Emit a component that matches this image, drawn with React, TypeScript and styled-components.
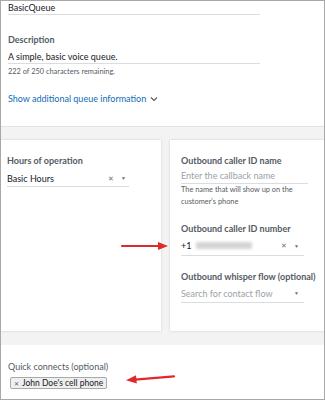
import React from 'react';
import styled, { createGlobalStyle } from 'styled-components';

const GlobalStyle = createGlobalStyle`
  html, body {
    margin: 0;
    padding: 0;
    background: #fff;
  }
  * {
    box-sizing: border-box;
  }
`;

// Page shell
const Page = styled.div`
  position: relative;
  width: 325px;
  height: 400px;
  border: 1px solid #a8a8a8;
  display: flex;
  flex-direction: column;
  overflow: hidden;
  font-family: Lato, 'Liberation Sans', sans-serif;
  color: #16191f;
`;

const TopSection = styled.section`
  height: 126px;
  padding-left: 7px;
  border-bottom: 1px solid #e2e2e2;
  display: flex;
  flex-direction: column;
`;

const GrayBand = styled.div`
  background: #f3f3f3;
  padding: 13px 0 14px;
  display: flex;
  gap: 9px;
`;

const Panel = styled.div<{ $width?: number }>`
  background: #fff;
  height: 191px;
  ${(p) => (p.$width ? `width: ${p.$width}px; flex-shrink: 0;` : 'flex: 1; min-width: 0;')}
  box-shadow: 0 0 2px rgba(0, 0, 0, 0.18);
  display: flex;
  flex-direction: column;
  padding: 14px 0 0 ${(p) => (p.$width ? 6 : 11)}px;
`;

const BottomSection = styled.section`
  flex: 1;
  padding: 15px 0 0 7px;
  display: flex;
  flex-direction: column;
  align-items: flex-start;
`;

// Form parts
const Label = styled.div<{ $top?: number; $weight?: number }>`
  font-size: 9px;
  font-weight: ${(p) => p.$weight ?? 700};
  line-height: 14px;
  color: #545b64;
  margin-top: ${(p) => p.$top ?? 0}px;
  white-space: nowrap;
`;

const Line = styled.div<{ $width: number; $height?: number; $muted?: boolean; $pad?: number }>`
  width: ${(p) => p.$width}px;
  height: ${(p) => p.$height ?? 16}px;
  padding-top: ${(p) => p.$pad ?? 0}px;
  border-bottom: 1px solid #dcdcdc;
  display: flex;
  align-items: center;
  font-size: 9px;
  color: ${(p) => (p.$muted ? '#9aa2a6' : '#16191f')};
  white-space: nowrap;
`;

const Helper = styled.div<{ $top?: number; $width?: number }>`
  font-size: 7.4px;
  line-height: 12px;
  color: #545b64;
  margin-top: ${(p) => p.$top ?? 0}px;
  ${(p) => (p.$width ? `width: ${p.$width}px;` : '')}
`;

const LinkText = styled.a`
  margin-top: 14px;
  font-size: 9px;
  line-height: 14px;
  color: #0f6cb5;
  text-decoration: none;
  display: flex;
  align-items: center;
  gap: 4px;
`;

const Controls = styled.span<{ $right?: number }>`
  margin-left: auto;
  margin-right: ${(p) => p.$right ?? 5}px;
  display: flex;
  align-items: center;
  gap: 7px;
  font-size: 7px;
  color: #687078;
`;

const Caret = styled.span`
  font-size: 5px;
  color: #687078;
`;

const Blurred = styled.span`
  display: inline-block;
  width: 56px;
  height: 7px;
  margin-left: 5px;
  background: #d4d4d4;
  filter: blur(1.5px);
`;

const Chip = styled.div`
  margin-top: 3px;
  margin-left: 2px;
  height: 12px;
  padding: 0 3px;
  border: 1px solid #a9a9a9;
  border-radius: 2px;
  background: #efefef;
  font-size: 8.5px;
  display: flex;
  align-items: center;
  gap: 3px;
  color: #16191f;
`;

const ChipX = styled.span`
  font-size: 6px;
  color: #545b64;
`;

const Arrow = styled.svg<{ $x: number; $y: number }>`
  position: absolute;
  left: ${(p) => p.$x}px;
  top: ${(p) => p.$y}px;
  overflow: visible;
`;

const App: React.FC = () => {
  return (
    <Page>
      <GlobalStyle />
      <TopSection>
        <Line $width={252} $height={14}>BasicQueue</Line>
        <Label $top={18}>Description</Label>
        <Line $width={252} $height={17} $pad={3}>A simple, basic voice queue.</Line>
        <Helper $top={2}>222 of 250 characters remaining.</Helper>
        <LinkText>
          Show additional queue information
          <svg width="8" height="6" viewBox="0 0 8 6">
            <path d="M1 1.5 L4 4.5 L7 1.5" fill="none" stroke="#545b64" strokeWidth="1.1" />
          </svg>
        </LinkText>
      </TopSection>

      <GrayBand>
        <Panel $width={160}>
          <Label>Hours of operation</Label>
          <Line $width={122} $height={19} $pad={2}>
            Basic Hours
            <Controls $right={3}>
              <span>✕</span>
              <Caret>▼</Caret>
            </Controls>
          </Line>
        </Panel>
        <Panel>
          <Label>Outbound caller ID name</Label>
          <Line $width={127} $height={16} $muted>Enter the callback name</Line>
          <Helper $width={120}>The name that will show up on the customer's phone</Helper>
          <Label $top={14}>Outbound caller ID number</Label>
          <Line $width={123} $height={20}>
            +1
            <Blurred />
            <Controls>
              <span>✕</span>
              <Caret>▼</Caret>
            </Controls>
          </Line>
          <Label $top={14}>Outbound whisper flow (optional)</Label>
          <Line $width={123} $height={19} $muted>
            Search for contact flow
            <Controls>
              <Caret>▼</Caret>
            </Controls>
          </Line>
        </Panel>
      </GrayBand>

      <BottomSection>
        <Label $weight={400}>Quick connects (optional)</Label>
        <Chip>
          <ChipX>✕</ChipX>
          John Doe's cell phone
        </Chip>
      </BottomSection>

      <Arrow $x={121} $y={240} width="48" height="10" viewBox="0 0 48 10">
        <path d="M0 5 L38 5" stroke="#e0292b" strokeWidth="2.2" strokeLinecap="round" />
        <path d="M36 1 L46 5 L36 9 Z" fill="#e0292b" />
      </Arrow>
      <Arrow $x={124} $y={373} width="50" height="10" viewBox="0 0 50 10">
        <path d="M10 5.6 L49 2.4" stroke="#e0292b" strokeWidth="2.2" strokeLinecap="round" />
        <path d="M11 1.2 L1 6.3 L11.8 9.6 Z" fill="#e0292b" />
      </Arrow>
    </Page>
  );
};

export default App;
